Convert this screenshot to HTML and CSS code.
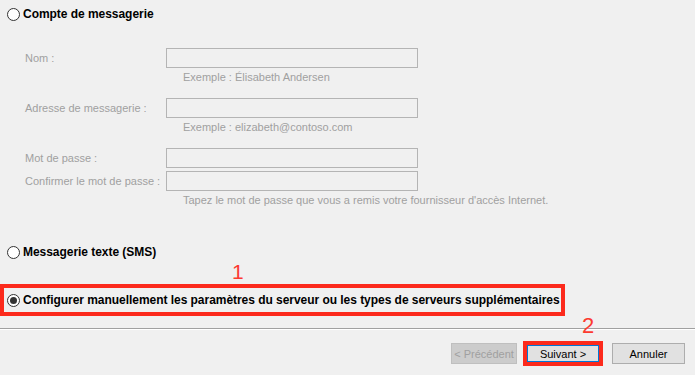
FILE: index.html
```html
<!DOCTYPE html>
<html lang="fr">
<head>
    <meta charset="UTF-8">
    <title>Ajouter un compte</title>
    <link rel="stylesheet" href="styles.css">
</head>
<body>
    <div class="page">
        <label class="option option-first">
            <span class="radio"></span>
            <span class="option-text">Compte de messagerie</span>
        </label>

        <div class="fields">
            <span class="label">Nom :</span>
            <span class="input"></span>
            <span class="hint">Exemple : Élisabeth Andersen</span>

            <span class="label">Adresse de messagerie :</span>
            <span class="input"></span>
            <span class="hint">Exemple : elizabeth@contoso.com</span>

            <span class="label">Mot de passe :</span>
            <span class="input"></span>
            <span class="label tight">Confirmer le mot de passe :</span>
            <span class="input tight"></span>
            <span class="hint">Tapez le mot de passe que vous a remis votre fournisseur d'accès Internet.</span>
        </div>

        <label class="option option-sms">
            <span class="radio"></span>
            <span class="option-text">Messagerie texte (SMS)</span>
        </label>

        <div class="highlight">
            <span class="mark mark-one">1</span>
            <label class="option">
                <span class="radio checked"></span>
                <span class="option-text">Configurer manuellement les paramètres du serveur ou les types de serveurs supplémentaires</span>
            </label>
        </div>

        <div class="separator"></div>

        <div class="buttons">
            <span class="mark mark-two">2</span>
            <button class="btn" disabled>&lt; Précédent</button>
            <div class="btn-box">
                <button class="btn btn-default">Suivant &gt;</button>
            </div>
            <button class="btn">Annuler</button>
        </div>
    </div>
</body>
</html>
```

FILE: styles.css
```css
/* General */
body {
    margin: 0;
    background-color: #f0f0f0;
    font-family: "Liberation Sans", Arial, sans-serif;
    color: #000;
}

.page {
    position: relative;
    width: 695px;
    height: 375px;
    overflow: hidden;
}

/* Radio options */
.option {
    display: flex;
    align-items: center;
    height: 16px;
    padding-left: 7px;
}

.option-first {
    margin-top: 6px;
}

.option-sms {
    margin-top: 35px;
}

.radio {
    box-sizing: border-box;
    width: 13px;
    height: 13px;
    border: 1px solid #333;
    border-radius: 50%;
    background-color: #fff;
    display: flex;
    align-items: center;
    justify-content: center;
    flex-shrink: 0;
}

.radio.checked::after {
    content: "";
    width: 7px;
    height: 7px;
    border-radius: 50%;
    background-color: #333;
}

.option-text {
    margin-left: 3px;
    font-size: 12px;
    font-weight: bold;
    letter-spacing: -0.04px;
    white-space: nowrap;
}

/* Disabled form fields */
.fields {
    display: grid;
    grid-template-columns: 141px 252px;
    margin-top: 26px;
    padding-left: 25px;
    font-size: 11px;
    color: #a0a0a0;
}

.label {
    height: 20px;
    line-height: 20px;
    white-space: nowrap;
}

.input {
    box-sizing: border-box;
    height: 20px;
    border: 1px solid #b4b4b4;
    background-color: #f0f0f0;
}

.tight {
    margin-top: 3px;
}

.hint {
    grid-column: 2;
    height: 18px;
    line-height: 18px;
    padding-left: 17px;
    margin-bottom: 12px;
    white-space: nowrap;
}

.hint:last-child {
    margin-bottom: 0;
}

/* Red annotations */
.highlight {
    position: relative;
    box-sizing: border-box;
    width: 565px;
    height: 32px;
    margin-top: 24px;
    border: 4px solid #fc2a1c;
    display: flex;
    align-items: center;
}

.highlight .option {
    padding-left: 3px;
}

.mark {
    position: absolute;
    color: #fc3a30;
    font-size: 21px;
    line-height: 1;
}

.mark-one {
    left: 228px;
    top: -27px;
}

.mark-two {
    left: 582px;
    top: -26px;
    font-size: 22px;
}

/* Footer */
.separator {
    margin-top: 12px;
    height: 1px;
    background-color: #a0a0a0;
    border-bottom: 1px solid #fff;
}

.buttons {
    position: relative;
    display: flex;
    align-items: center;
    justify-content: flex-end;
    margin-top: 11px;
    padding-right: 10px;
    height: 25px;
}

.btn {
    box-sizing: border-box;
    height: 21px;
    padding: 0;
    border: 1px solid #adadad;
    background-color: #e1e1e1;
    font-family: "Liberation Sans", Arial, sans-serif;
    font-size: 11px;
    color: #000;
}

.btn[disabled] {
    width: 66px;
    background-color: #cccccc;
    border-color: #bfbfbf;
    color: #a0a0a0;
}

.btn-box {
    box-sizing: border-box;
    width: 80px;
    height: 25px;
    margin: 0 9px 0 6px;
    border: 4px solid #fc2a1c;
    display: flex;
}

.btn-default {
    width: 72px;
    height: 17px;
    border-color: #0078d7;
}

.buttons > .btn:last-child {
    width: 73px;
}
```
